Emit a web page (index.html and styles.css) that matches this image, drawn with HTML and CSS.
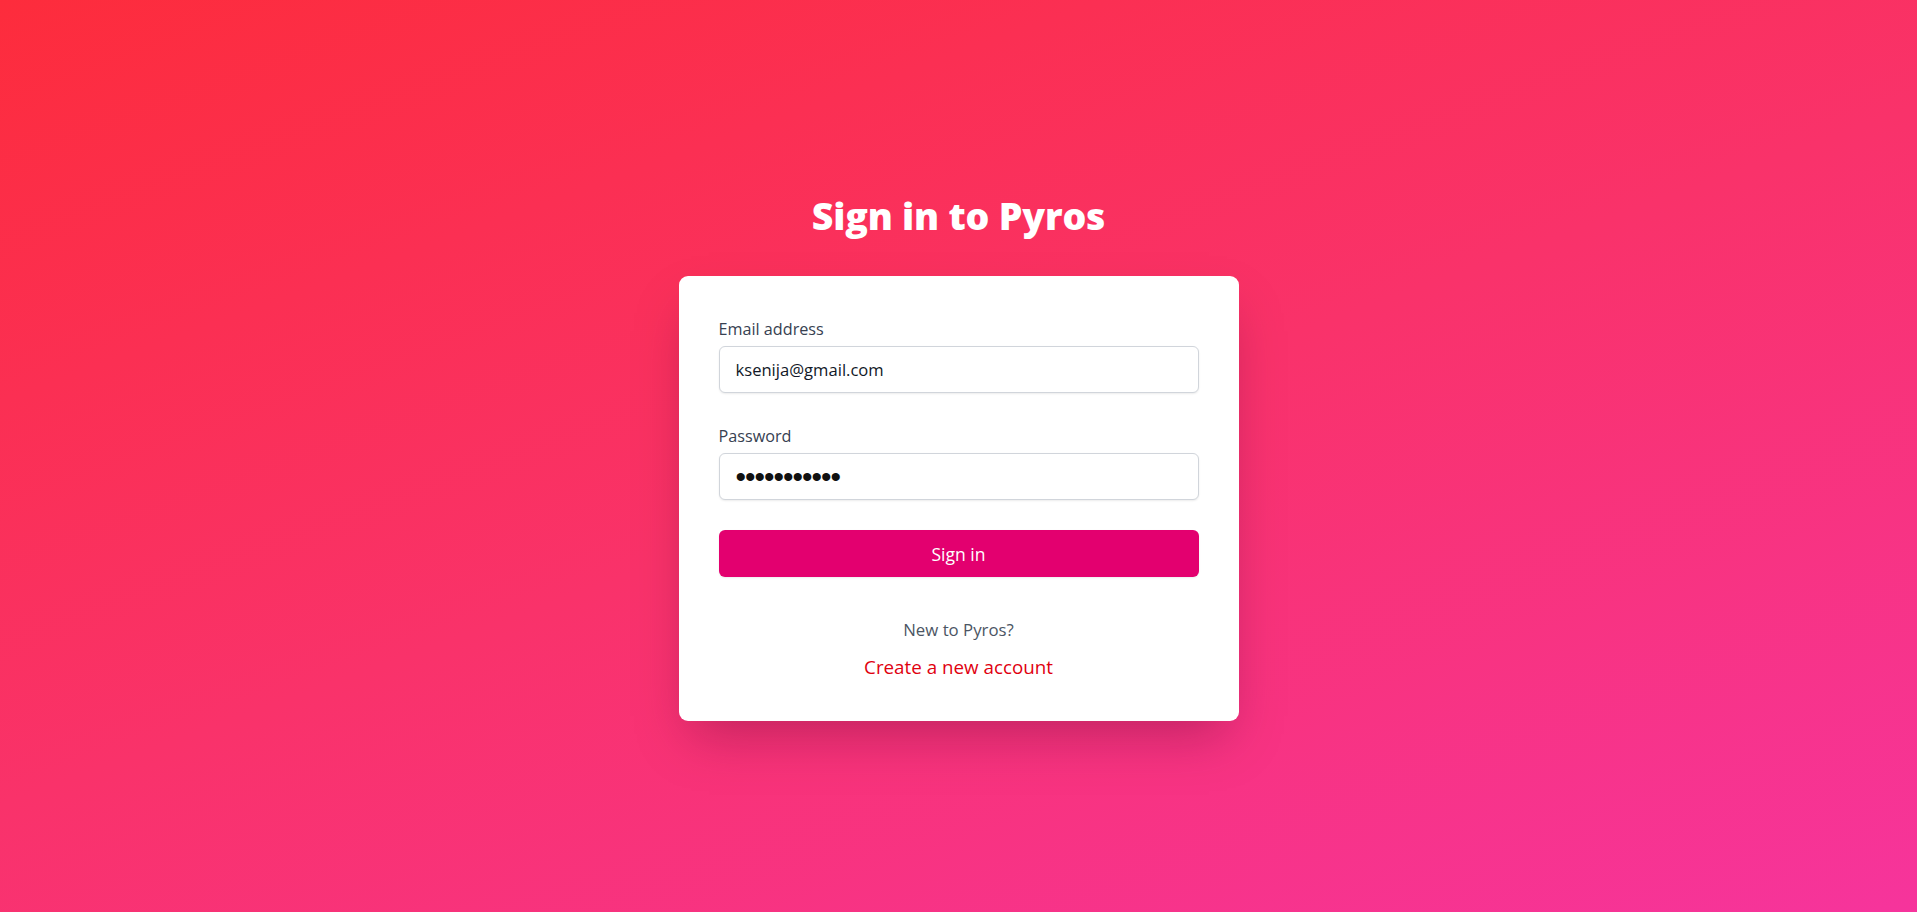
FILE: index.html
```html
<!DOCTYPE html>
<html lang="en">
<head>
<meta charset="utf-8">
<title>Sign in to Pyros</title>
<link rel="stylesheet" href="styles.css">
</head>
<body>
<main class="page">
  <h1 class="title">Sign in to Pyros</h1>
  <div class="card">
    <form class="form">
      <label class="label" for="email">Email address</label>
      <input class="input" id="email" type="email" value="ksenija@gmail.com">
      <label class="label label-second" for="password">Password</label>
      <input class="input input-password" id="password" type="password" value="ksenija1234">
      <button class="button" type="button">Sign in</button>
    </form>
    <div class="footer">
      <p class="new">New to Pyros?</p>
      <a class="create" href="#">Create a new account</a>
    </div>
  </div>
</main>
</body>
</html>
```

FILE: styles.css
```css
* { box-sizing: border-box; }
html, body { margin: 0; height: 100%; }
body {
  font-family: "Open Sans", "Noto Sans", sans-serif;
  background: linear-gradient(160deg, #fd2c3c 0%, #f9326a 50%, #f6349c 100%);
  background-attachment: fixed;
}
.page {
  min-height: 100%;
  display: flex;
  flex-direction: column;
  align-items: center;
  justify-content: center;
  padding-top: 5px;
}
.title {
  margin: 0 0 40px;
  font-family: "Open Sans", sans-serif;
  font-weight: 800;
  font-size: 37.5px;
  line-height: 40px;
  color: #fff;
  letter-spacing: -0.2px;
}
.card {
  width: 560px;
  background: #fff;
  border-radius: 9px;
  padding: 40px 40px 41px;
  box-shadow: 0 25px 50px -12px rgba(90, 10, 50, 0.35);
}
.form { display: flex; flex-direction: column; }
.label {
  font-size: 16.2px;
  line-height: 26px;
  color: #374151;
  margin-bottom: 4px;
}
.label-second { margin-top: 30px; }
.input {
  height: 47px;
  width: 100%;
  border: 1px solid #d1d5db;
  border-radius: 6px;
  box-shadow: 0 1px 2px rgba(0, 0, 0, 0.08);
  padding: 0 16px;
  font-family: "Open Sans", sans-serif;
  font-size: 16.6px;
  color: #111827;
  outline: none;
}
.input-password {
  font-family: "Liberation Sans", sans-serif;
  font-size: 30px;
  letter-spacing: -1px;
  color: #111111;
}
.button {
  margin-top: 30px;
  height: 47px;
  border: 0;
  border-radius: 6px;
  background: #e3006f;
  color: #fff;
  font-family: "Open Sans", sans-serif;
  font-size: 17.5px;
  box-shadow: 0 1px 2px rgba(0,0,0,0.08);
  cursor: pointer;
}
.footer {
  margin-top: 41px;
  display: flex;
  flex-direction: column;
  align-items: center;
}
.new {
  margin: 0;
  font-size: 16.8px;
  line-height: 24px;
  color: #4b5563;
}
.create {
  margin-top: 12px;
  font-size: 18.8px;
  line-height: 26px;
  color: #e0000f;
  text-decoration: none;
}
```
